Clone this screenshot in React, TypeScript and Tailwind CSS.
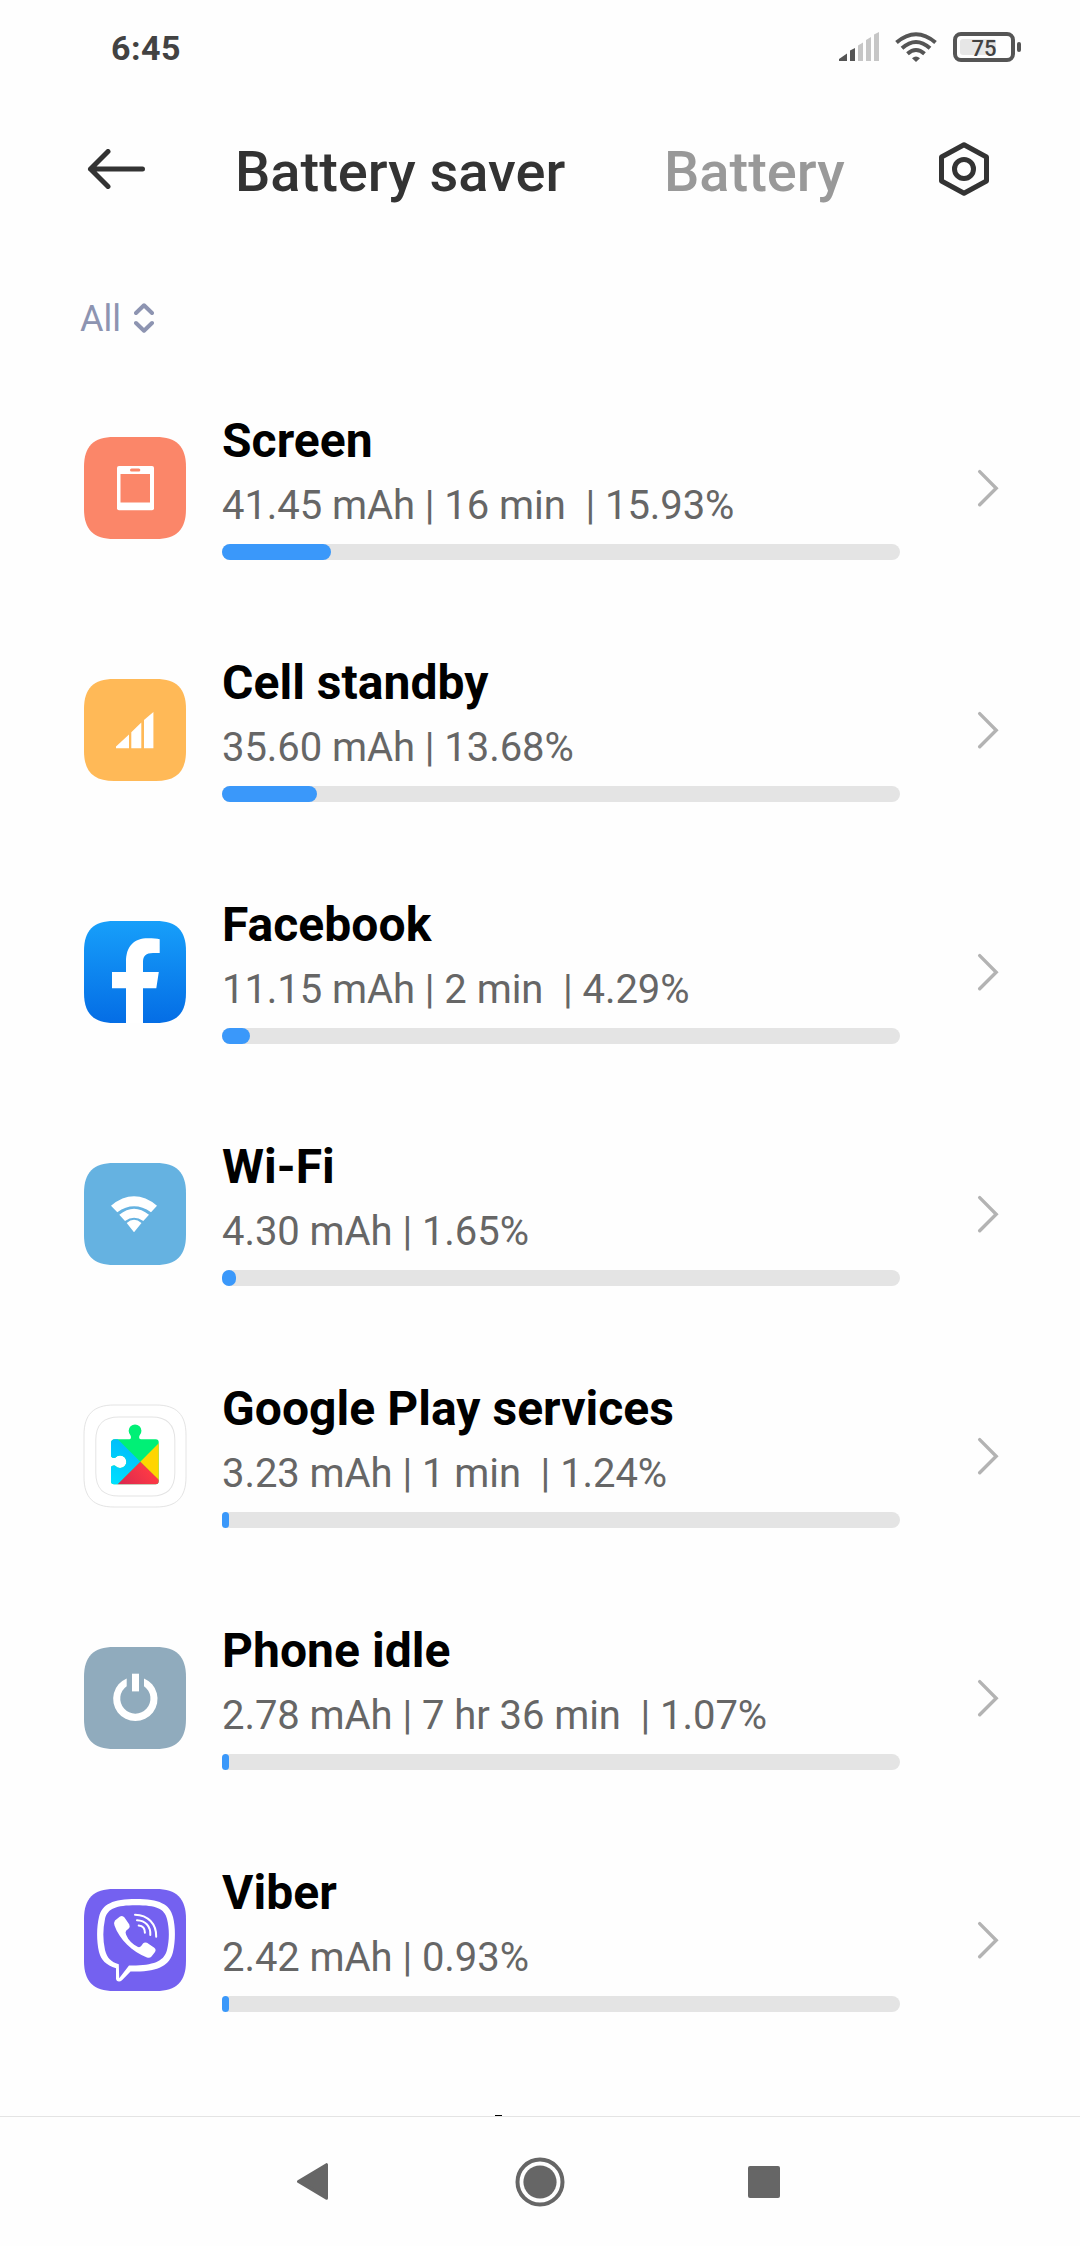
import type { ReactNode } from "react";

interface Usage {
  name: string;
  details: string;
  fill: number;
  icon: ReactNode;
}

const TILE = "M0 30C0 9.5 9.5 0 30 0H72C92.5 0 102 9.5 102 30V72C102 92.5 92.5 102 72 102H30C9.5 102 0 92.5 0 72Z";

function Tile({ color, children }: { color: string; children: ReactNode }) {
  return (
    <svg width="102" height="102" viewBox="0 0 102 102" fill="none" className="shrink-0">
      <path d={TILE} fill={color} />
      {children}
    </svg>
  );
}

function ScreenIcon() {
  return (
    <Tile color="#fb8669">
      <rect x="33" y="29" width="37" height="44.3" rx="2" fill="white" />
      <rect x="36.5" y="37" width="29.5" height="28.5" fill="#fb8669" />
      <rect x="46" y="31.6" width="10.3" height="3" rx="1.5" fill="#fb8669" />
    </Tile>
  );
}

function CellIcon() {
  return (
    <Tile color="#ffb957">
      <path d="M32 69.2V67.5L45 55.4V69.2ZM47.3 69.2V53.2L57.3 43.6V69.2ZM60 69.2V41L69.4 33V69.2Z" fill="white" />
    </Tile>
  );
}

function FacebookIcon() {
  return (
    <Tile color="url(#fb)">
      <defs>
        <linearGradient id="fb" x1="0" y1="0" x2="0" y2="1">
          <stop stopColor="#179ffa" />
          <stop offset="1" stopColor="#046de5" />
        </linearGradient>
      </defs>
      <path d="M42 102V67.3H28V51H42V41C42 25 50 17.2 64 17.2C69 17.2 73 17.6 75.7 18.2V32H69C62 32 59 35 59 41V51H74.8L72.3 67.3H59V102Z" fill="white" />
    </Tile>
  );
}

function WifiIcon() {
  return (
    <Tile color="#65b2e1">
      <path d="M27 42.7Q50 24 73 42.7L67 49.3Q50 37.4 33.3 49.3ZM35.3 51.7Q50 39.7 65 51.7L59.3 57.9Q50 51.5 41 57.9ZM42.7 59.9Q50 53.5 57.5 59.9L50 69.3Z" fill="white" />
    </Tile>
  );
}

function PlayIcon() {
  return (
    <svg width="102" height="102" viewBox="0 0 102 102" fill="none" className="shrink-0 overflow-visible">
      <path d={TILE} fill="white" stroke="#e4e4e4" strokeWidth="1" />
      <path d={TILE} transform="translate(11.8 12) scale(.775)" stroke="#e4e4e4" strokeWidth="1.3" />
      <clipPath id="puzzle">
        <path d="M31 34.2H45.5C47 34.2 47.4 32 46.4 30.2A6.4 6.4 0 1 1 55.7 30.2C54.7 32 55 34.2 57 34.2H71.7Q74.7 34.2 74.7 37.2V76.3Q74.7 79.3 71.7 79.3H30Q27 79.3 27 76.3V63C27 60.5 30 60 31.5 61A6.3 6.3 0 1 0 31.5 52.4C30 53.5 27 53 27 50.5V38Q27 34.2 31 34.2Z" />
      </clipPath>
      <g clipPath="url(#puzzle)">
        <rect x="25" y="17" width="52" height="64" fill="#00f076" />
        <path d="M25 25.5L56.3 56.7L32 81H25Z" fill="url(#blue)" />
        <path d="M77 36L56.3 56.7L77 77.5Z" fill="#ffd500" />
        <path d="M56.3 56.7L32 81H81Z" fill="url(#red)" />
      </g>
      <linearGradient id="blue" x1="50" y1="35" x2="30" y2="80" gradientUnits="userSpaceOnUse">
        <stop stopColor="#00b9fa" />
        <stop offset="1" stopColor="#00e0ff" />
      </linearGradient>
      <linearGradient id="red" x1="66" y1="64" x2="40" y2="86" gradientUnits="userSpaceOnUse">
        <stop stopColor="#ff3a44" />
        <stop offset="1" stopColor="#d92850" />
      </linearGradient>
    </svg>
  );
}

function PowerIcon() {
  return (
    <Tile color="#90abbd">
      <rect x="48" y="26.7" width="7" height="17.7" fill="white" />
      <path d="M60 31.4A22.2 22.2 0 1 1 42.7 31.4V39.2A15.1 15.1 0 1 0 60 39.2Z" fill="white" />
    </Tile>
  );
}

function ViberIcon() {
  return (
    <Tile color="#7461f0">
      <path d="M52 10C75 10 86 15 89 28C91.6 38 91.6 52 89 63C86 76 75 82.3 52 82.6H46.5L38 91.2C35.5 93.6 32 92.5 32 89.5V79.3C22 76 17 71 15 63C12.5 52 12.5 38 15 28C18 15 29 10 52 10Z" fill="white" />
      <path d="M52 16.3C72 16.3 80.5 19.5 83 30C85.5 40 85.5 51 83 61C80.5 71 72 75.8 52 76.5H45L35.2 89.3L34.8 75.2C27 73 23 69 21 61C18.8 51 18.8 40 21 30C23.5 19.5 32 16.3 52 16.3Z" fill="#7461f0" />
      <path d="M31 31.5L36 27.6Q38.5 26 40.5 28.5L45.3 35.5Q46.5 38 44.5 39.8L42.3 41.5Q41 43 42 45.5C44.5 51.5 48.5 55.5 54 58Q56 58.6 57.2 57L59 54.5Q60.5 52.7 63 53.8L70.3 58.7Q72.5 60.5 71 63L67.5 67.5Q65.8 69.5 63 68.5C48 62.5 35.5 50.5 30.5 36.5Q29.5 33.5 31 31.5Z" fill="white" />
      <g stroke="white" strokeWidth="2" strokeLinecap="round">
        <path d="M51 25.7C64 26 72.5 35 72.2 47.8" />
        <path d="M53 31.2C61.5 31.5 66.8 37.5 66.3 46" />
        <path d="M54.7 36.6C58.5 37 61 39.5 60.9 43.7" />
      </g>
    </Tile>
  );
}

const items: Usage[] = [
  { name: "Screen", details: "41.45 mAh | 16 min  | 15.93%", fill: 109, icon: <ScreenIcon /> },
  { name: "Cell standby", details: "35.60 mAh | 13.68%", fill: 95, icon: <CellIcon /> },
  { name: "Facebook", details: "11.15 mAh | 2 min  | 4.29%", fill: 28, icon: <FacebookIcon /> },
  { name: "Wi-Fi", details: "4.30 mAh | 1.65%", fill: 14, icon: <WifiIcon /> },
  { name: "Google Play services", details: "3.23 mAh | 1 min  | 1.24%", fill: 7, icon: <PlayIcon /> },
  { name: "Phone idle", details: "2.78 mAh | 7 hr 36 min  | 1.07%", fill: 7, icon: <PowerIcon /> },
  { name: "Viber", details: "2.42 mAh | 0.93%", fill: 7, icon: <ViberIcon /> },
];

function StatusBar() {
  return (
    <div className="flex h-[94px] items-center justify-between pl-[111px] pr-[59px] text-[#424242]">
      <span className="text-[34px] font-bold leading-none tracking-[0.5px] pt-0.5">6:45</span>
      <div className="flex items-center">
        <svg width="40" height="30" viewBox="0 0 40 30" fill="#c6c6c6">
          <path d="M0 29V27L8 21.5V29ZM11 29V18.5L16 16V29Z" fill="#555" />
          <path d="M19 29V13.5L24 10.5V29ZM27 29V8L32 5V29ZM35 29V2.5L40 0V29Z" />
        </svg>
        <svg width="42" height="30" viewBox="0 0 42 30" fill="none" stroke="#555" strokeWidth="4" className="ml-4">
          <path d="M1.5 10.5Q21 -6 40.5 10.5M7 16.3Q21 3.7 35 16.3M12.5 21.8Q21 14.2 29.5 21.8" />
          <path d="M17 26.3Q21 22.5 25 26.3L21 30Z" fill="#555" stroke="none" />
        </svg>
        <div className="relative ml-4 flex h-[30px] w-[62px] items-center justify-center rounded-[8px] border-4 border-[#555]">
          <div className="absolute left-[3px] top-[3px] h-4 w-9 rounded-[3px] bg-[#e6e6e6]" />
          <span className="relative pt-[3px] text-[22px] font-medium leading-none">75</span>
        </div>
        <div className="ml-0.5 h-2.5 w-1 rounded-[2px] bg-[#555]" />
      </div>
    </div>
  );
}

function Header() {
  return (
    <header className="flex h-[150px] items-center pl-[87px] text-[56px] font-medium leading-none text-[#333]">
      <svg width="58" height="40" viewBox="0 0 58 40" fill="none" stroke="#333" strokeWidth="5" strokeLinecap="round" strokeLinejoin="round">
        <path d="M55.5 20H3.5M21 2.5L3.5 20L21 37.5" />
      </svg>
      <h1 className="ml-[90px] w-[429px] pt-1.5">Battery saver</h1>
      <span className="w-[275px] pt-1.5 text-[#999]">Battery</span>
      <svg width="50" height="54" viewBox="0 0 50 54" fill="none" stroke="#333" strokeWidth="5" strokeLinejoin="round">
        <path d="M25 2.7L47.5 15V39L25 51.3L2.5 39V15Z" />
        <circle cx="25" cy="27" r="9.5" />
      </svg>
    </header>
  );
}

function UsageRow({ item }: { item: Usage }) {
  return (
    <li className="flex h-[242px] items-center pl-[84px]">
      {item.icon}
      <div className="ml-9 w-[678px]">
        <h2 className="text-[48px] font-bold leading-[50px] tracking-[0.04px] text-black">{item.name}</h2>
        <p className="mt-2.5 whitespace-pre text-[40px] leading-[60px] tracking-[-0.07px] text-[#666]">{item.details}</p>
        <div className="mt-2 h-4 rounded-full bg-[#e4e4e4]">
          <div className="h-4 rounded-full bg-[#3a98fa]" style={{ width: item.fill }} />
        </div>
      </div>
      <svg width="22" height="38" viewBox="0 0 22 38" fill="none" stroke="#b3b3b3" strokeWidth="3.4" strokeLinecap="round" className="ml-[77px]">
        <path d="M2.7 2.6L19.2 19.2L2.7 35.8" />
      </svg>
    </li>
  );
}

function NavBar() {
  return (
    <nav className="flex h-[130px] items-center border-t border-[#e4e4e4] pl-[297px]">
      <svg width="31" height="37" viewBox="0 0 31 37" fill="#666" stroke="#666" strokeWidth="3" strokeLinejoin="round">
        <path d="M29.5 1.7V35.3L1.5 18.5Z" />
      </svg>
      <svg width="50" height="50" viewBox="0 0 50 50" className="ml-[187px]">
        <circle cx="25" cy="25" r="22.5" fill="none" stroke="#666" strokeWidth="4" />
        <circle cx="25" cy="25" r="16.6" fill="#666" />
      </svg>
      <div className="ml-[183px] h-8 w-8 rounded-[2px] bg-[#666]" />
    </nav>
  );
}

export default function App() {
  return (
    <div className="flex h-[2246px] w-[1080px] flex-col overflow-hidden bg-[#fefefe] font-['Roboto',sans-serif]">
      <StatusBar />
      <Header />
      <div className="flex h-[123px] items-center gap-[13px] pl-20 pt-[25px] text-[36px] leading-none text-[#8d94b1]">
        <span className="pt-px">All</span>
        <svg width="20" height="30" viewBox="0 0 20 30" fill="none" stroke="#8d94b1" strokeWidth="4" strokeLinecap="round" strokeLinejoin="round">
          <path d="M2 10L10 2.3L18 10M2 20L10 27.7L18 20" />
        </svg>
      </div>
      <ul className="min-h-0 flex-1 overflow-hidden">
        {items.map((item) => (
          <UsageRow key={item.name} item={item} />
        ))}
        {/* Sliver of the next row, cut off by the navigation bar */}
        <li className="mt-[54px] ml-[495px] h-px w-[7px] bg-black" />
      </ul>
      <NavBar />
    </div>
  );
}
